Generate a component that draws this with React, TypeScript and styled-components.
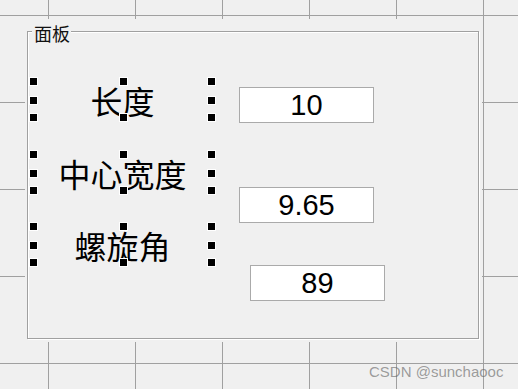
import styled, { createGlobalStyle } from "styled-components"

const GlobalStyle = createGlobalStyle`
  html, body {
    margin: 0;
    padding: 0;
    background: #f0f0f0;
  }
`

// layout editor canvas with the 87px grid
const Canvas = styled.div`
  position: relative;
  width: 518px;
  height: 389px;
  overflow: hidden;
  background-color: #f0f0f0;
  background-image:
    linear-gradient(to right, #a0a0a0 1px, transparent 1px),
    linear-gradient(to bottom, #a0a0a0 1px, transparent 1px);
  background-size: 87px 87px;
  background-position: 48px 15px;
`

const Panel = styled.div`
  position: absolute;
  left: 25px;
  top: 19px;
  width: 457px;
  height: 323px;
  background: #f0f0f0;
`

const PanelBorder = styled.div`
  position: absolute;
  left: 2px;
  top: 12px;
  width: 450px;
  height: 306px;
  border: 1px solid #a0a0a0;
  box-shadow: inset 1px 1px 0 #ffffff, 1px 1px 0 #ffffff;
`

const PanelTitle = styled.div`
  position: absolute;
  left: 7px;
  top: 4px;
  padding: 0 1px 0 2px;
  background: #f0f0f0;
  font-family: "Noto Sans CJK SC", sans-serif;
  font-size: 18px;
  line-height: 20px;
  color: #111;
`

const StaticText = styled.div<{ $top: number }>`
  position: absolute;
  left: 9px;
  top: ${p => p.$top}px;
  width: 177px;
  height: 35px;
  display: flex;
  justify-content: center;
  align-items: flex-start;
  padding-top: 1px;
  box-sizing: border-box;
  font-family: "Noto Sans CJK SC", sans-serif;
  font-size: 32px;
  line-height: 35px;
  color: #000;
  white-space: nowrap;
`

const Handle = styled.span<{ $x: "l" | "c" | "r"; $y: "t" | "m" | "b" }>`
  position: absolute;
  width: 7px;
  height: 7px;
  background: #000;
  outline: 1px solid #fff;
  ${p => (p.$x === "l" ? "left: -4px;" : p.$x === "c" ? "left: 86px;" : "right: -4px;")}
  ${p => (p.$y === "t" ? "top: -4px;" : p.$y === "m" ? "top: 15px;" : "bottom: -4px;")}
`

const EditBox = styled.div<{ $left: number; $top: number }>`
  position: absolute;
  left: ${p => p.$left}px;
  top: ${p => p.$top}px;
  width: 135px;
  height: 36px;
  box-sizing: border-box;
  border: 1px solid #aaaaaa;
  background: #ffffff;
  display: flex;
  align-items: center;
  justify-content: center;
  font-family: "Liberation Sans", Arial, sans-serif;
  font-size: 29px;
  color: #000;
`

const Watermark = styled.div`
  position: absolute;
  left: 369px;
  top: 363px;
  font-family: "Liberation Sans", Arial, sans-serif;
  font-size: 15px;
  line-height: 17px;
  color: rgba(100, 100, 100, 0.62);
  white-space: nowrap;
`

const handleSpots: { x: "l" | "c" | "r"; y: "t" | "m" | "b" }[] = [
  { x: "l", y: "t" },
  { x: "c", y: "t" },
  { x: "r", y: "t" },
  { x: "l", y: "m" },
  { x: "r", y: "m" },
  { x: "l", y: "b" },
  { x: "c", y: "b" },
  { x: "r", y: "b" },
]

const labels = [
  { text: "长度", top: 63 },
  { text: "中心宽度", top: 136 },
  { text: "螺旋角", top: 208 },
]

const edits = [
  { value: "10", left: 214, top: 68 },
  { value: "9.65", left: 214, top: 168 },
  { value: "89", left: 225, top: 246 },
]

export default function App() {
  return (
    <>
      <GlobalStyle />
      <Canvas>
        <Panel>
          <PanelBorder />
          <PanelTitle>面板</PanelTitle>

          {labels.map(l => (
            <StaticText key={l.text} $top={l.top}>
              {l.text}
              {handleSpots.map(h => (
                <Handle key={h.x + h.y} $x={h.x} $y={h.y} />
              ))}
            </StaticText>
          ))}

          {edits.map(e => (
            <EditBox key={e.value} $left={e.left} $top={e.top}>
              {e.value}
            </EditBox>
          ))}
        </Panel>
        <Watermark>CSDN @sunchaooc</Watermark>
      </Canvas>
    </>
  )
}
